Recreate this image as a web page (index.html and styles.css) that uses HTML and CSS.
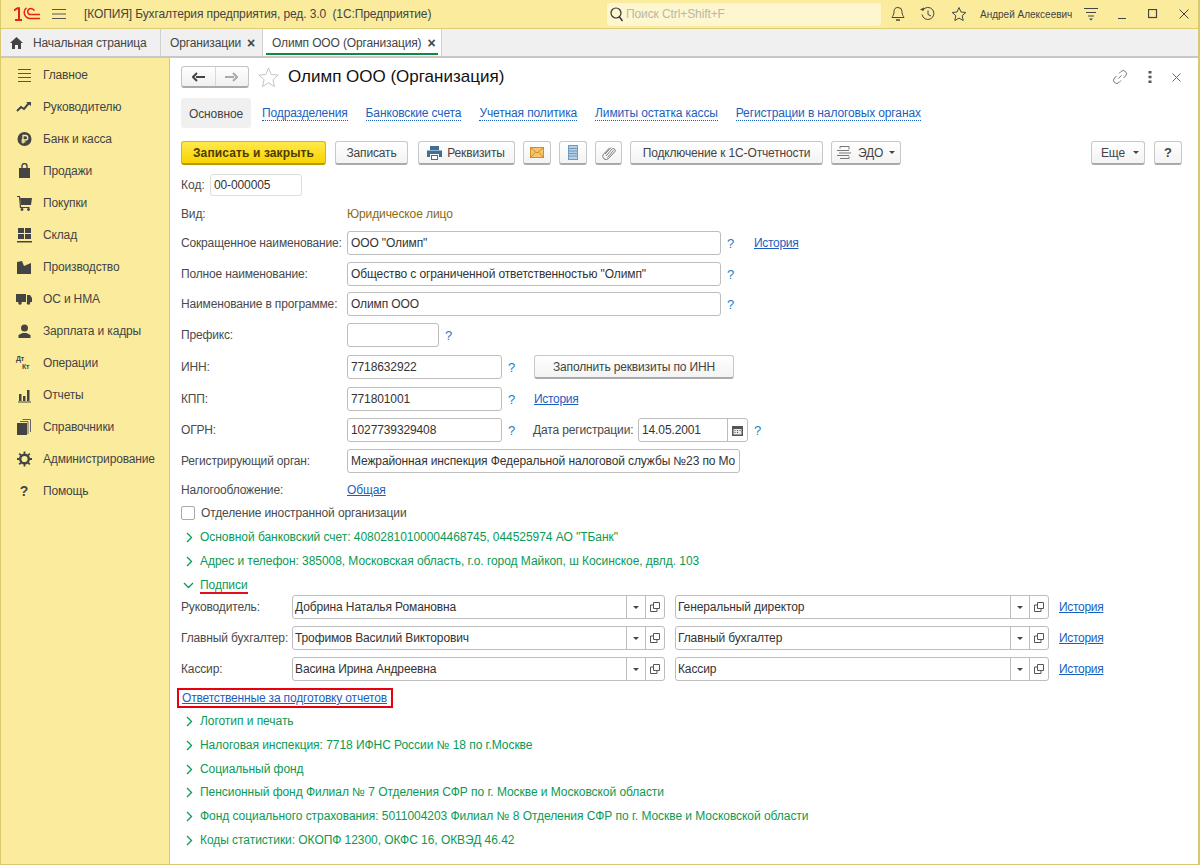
FILE: index.html
```html
<!DOCTYPE html>
<html lang="ru">
<head>
<meta charset="utf-8">
<title>Олимп ООО (Организация)</title>
<link rel="stylesheet" href="styles.css">
</head>
<body>
<div class="app">
  <header class="titlebar">
    <svg class="logo" width="26" height="14" viewBox="0 0 26 14"><path d="M0 3.500L3.500 1.200H5V13M1 13h7" fill="none" stroke="#e2231a" stroke-width="2"/><path d="M26 7.500H15.500a3.200 3.200 0 0 1 0-5.800c2.500-.8 4 .5 5 2" fill="none" stroke="#e2231a" stroke-width="1.500"/><path d="M26 11.500H15.500a6.500 6.500 0 0 1-5.300-6.500c0-2 1-3.300 2.300-4.200" fill="none" stroke="#e2231a" stroke-width="1.500"/></svg>
    <svg class="burger" width="14" height="12" viewBox="0 0 14 12"><path d="M0 1.500h14M0 6h14M0 10.500h14" stroke="#555" stroke-width="1"/></svg>
    <div class="app-title">[КОПИЯ] Бухгалтерия предприятия, ред. 3.0  (1С:Предприятие)</div>
    <div class="search">
      <svg width="14" height="15" viewBox="0 0 14 15"><circle cx="6" cy="6" r="5" fill="none" stroke="#333" stroke-width="1.2"/><path d="M9.500 10l3 4" stroke="#333" stroke-width="1.4"/></svg>
      <span>Поиск Ctrl+Shift+F</span>
    </div>
    <div class="tb-icons">
      <svg width="14" height="16" viewBox="0 0 14 16"><path d="M7 1.500a4 4 0 0 0-4 4c0 4-2 5-2 6h12c0-1-2-2-2-6a4 4 0 0 0-4-4z" fill="none" stroke="#444"/><path d="M5 14h4" stroke="#444" stroke-width="1.500"/></svg>
      <svg width="16" height="16" viewBox="0 0 16 16"><path d="M3 4a6 6 0 1 1-1 4.500" fill="none" stroke="#444"/><path d="M0 3.500l3.500 1.500 0.500-3.500z" fill="#444"/><path d="M8 4.500v4l3 1.500" fill="none" stroke="#444"/></svg>
      <svg width="16" height="16" viewBox="0 0 16 16"><path d="M8 1.500l2 4.500 4.800.5-3.600 3.200 1 4.800L8 12.100 3.800 14.500l1-4.800L1.200 6.500 6 6z" fill="none" stroke="#444"/></svg>
    </div>
    <div class="user">Андрей Алексеевич</div>
    <svg class="funnel" width="14" height="14" viewBox="0 0 14 14"><path d="M0 1.500h14M2 5.500h10M4 9h6" stroke="#444"/><path d="M5 11.500h4l-2 2z" fill="#444"/></svg>
    <div class="win-btns">
      <svg width="10" height="10" viewBox="0 0 10 10"><path d="M1 9.500h8" stroke="#444"/></svg>
      <svg width="10" height="10" viewBox="0 0 10 10"><rect x=".5" y=".5" width="8" height="8" fill="none" stroke="#444" stroke-width="1.200"/></svg>
      <svg width="10" height="10" viewBox="0 0 10 10"><path d="M.5.500l9 9M9.500.500l-9 9" stroke="#444"/></svg>
    </div>
  </header>

  <nav class="tabs">
    <div class="tab tab-home">
      <svg width="13" height="12" viewBox="0 0 13 12"><path d="M6.500 0L0 6h2v6h3V8h3v4h3V6h2z" fill="#444"/></svg>
      <span>Начальная страница</span>
    </div>
    <div class="tab tab-org"><span>Организации</span><b class="tab-x">×</b></div>
    <div class="tab tab-active"><span>Олимп ООО (Организация)</span><b class="tab-x">×</b></div>
  </nav>

  <div class="main">
    <aside class="sidebar">
      <div class="side-item"><svg class="si" viewBox="0 0 16 16"><path d="M2 2.500h13M2 6.500h13M2 10.500h13M2 14.500h13" stroke="#555"/></svg>Главное</div>
      <div class="side-item"><svg class="si" viewBox="0 0 16 16"><path d="M1 12l4-4 3 2 5-6" fill="none" stroke="#444" stroke-width="2"/><path d="M10 3h5v4z" fill="#444"/></svg>Руководителю</div>
      <div class="side-item"><svg class="si" viewBox="0 0 16 16"><circle cx="8.500" cy="8" r="7" fill="#444"/><path d="M7 12.500V4.500h2.500a2 2 0 0 1 0 4.500H5.500M5.500 10.800h4" fill="none" stroke="#fbeb9b" stroke-width="1.300"/></svg>Банк и касса</div>
      <div class="side-item"><svg class="si" viewBox="0 0 16 16"><path d="M3 5h11v10H3z" fill="#444"/><path d="M6 7V3a2.500 2.500 0 0 1 5 0v4" fill="none" stroke="#444" stroke-width="1.400"/></svg>Продажи</div>
      <div class="side-item"><svg class="si" viewBox="0 0 16 16"><path d="M1 1.500h2.500l1 11h9" fill="none" stroke="#444" stroke-width="1.200"/><path d="M4 3h12l-1 7H5z" fill="#444"/><circle cx="6" cy="14.500" r="1.400" fill="#444"/><circle cx="12.500" cy="14.500" r="1.400" fill="#444"/></svg>Покупки</div>
      <div class="side-item"><svg class="si" viewBox="0 0 16 16"><path d="M2 1h6v5H2zM9 1h6v5H9zM2 7h6v5H2zM9 7h6v5H9zM1 14h15v1.500H1z" fill="#444"/></svg>Склад</div>
      <div class="side-item"><svg class="si" viewBox="0 0 16 16"><path d="M1 15V3l5-1 2 5 7-3v11z" fill="#444"/></svg>Производство</div>
      <div class="side-item"><svg class="si" viewBox="0 0 16 16"><path d="M0 3h10v8H0zM11 4h3l2 3v4h-5z" fill="#444"/><circle cx="4" cy="12" r="1.800" fill="#444"/><circle cx="12.500" cy="12" r="1.800" fill="#444"/></svg>ОС и НМА</div>
      <div class="side-item"><svg class="si" viewBox="0 0 16 16"><circle cx="8.500" cy="5" r="3.500" fill="#444"/><path d="M2.500 15v-3l4-2h4l4 2v3z" fill="#444"/></svg>Зарплата и кадры</div>
      <div class="side-item"><span class="dtkt"><i>Дт</i><i class="kt">Кт</i></span>Операции</div>
      <div class="side-item"><svg class="si" viewBox="0 0 16 16"><path d="M3 7h2.500v7H3zM7 9h2.500v5H7zM11 3h2.500v11H11zM2 14.500h13V15.500H2z" fill="#444"/></svg>Отчеты</div>
      <div class="side-item"><svg class="si" viewBox="0 0 16 16"><path d="M1 4h10v12H1z" fill="#444"/><path d="M12 15V2.500H4M14.500 13V.500H6.500" fill="none" stroke="#666"/></svg>Справочники</div>
      <div class="side-item"><svg class="si" viewBox="0 0 16 16"><circle cx="8.500" cy="8" r="4.300" fill="none" stroke="#444" stroke-width="2.400"/><path d="M8.500 0.500v15M1 8h15M3.200 2.700l10.600 10.600M13.800 2.700L3.200 13.300" stroke="#444" stroke-width="1.800" stroke-dasharray="2.500 10"/></svg>Администрирование</div>
      <div class="side-item"><span class="side-q">?</span>Помощь</div>
    </aside>

    <section class="content">
      <div class="form-head">
        <div class="nav-btns">
          <span class="nav-b"><svg width="13" height="10" viewBox="0 0 13 10"><path d="M13 5H4M5 1L1 5l4 4" fill="none" stroke="#444" stroke-width="2"/></svg></span>
          <span class="nav-b"><svg width="13" height="10" viewBox="0 0 13 10"><path d="M0 5h9M8 1l4 4-4 4" fill="none" stroke="#aaa" stroke-width="2"/></svg></span>
        </div>
        <svg class="fav" width="21" height="20" viewBox="0 0 21 20"><path d="M10.500 1l2.700 6.500 7 .6-5.300 4.600 1.600 6.800-6-3.600-6 3.600 1.600-6.800L.8 8.100l7-.6z" fill="#fff" stroke="#c4c4c4"/></svg>
        <h1 class="form-title">Олимп ООО (Организация)</h1>
        <div class="head-tools">
          <svg width="16" height="16" viewBox="0 0 16 16"><path d="M6.500 9.500l3-3M7 4.500l2-2a3 3 0 0 1 4.500 4.500l-2 2M9 11.500l-2 2A3 3 0 0 1 2.500 9l2-2" fill="none" stroke="#777"/></svg>
          <svg width="4" height="12" viewBox="0 0 4 12"><path d="M.5 0h3v2.500h-3zM.5 4.700h3v2.500h-3zM.5 9.400h3v2.500h-3z" fill="#555"/></svg>
          <svg width="9" height="9" viewBox="0 0 9 9"><path d="M.5.500l8 8M8.500.500l-8 8" stroke="#666"/></svg>
        </div>
      </div>

      <div class="form-tabs">
        <span class="ft-current">Основное</span>
        <a class="ft-link ft1">Подразделения</a>
        <a class="ft-link">Банковские счета</a>
        <a class="ft-link">Учетная политика</a>
        <a class="ft-link">Лимиты остатка кассы</a>
        <a class="ft-link">Регистрации в налоговых органах</a>
      </div>

      <div class="cmd">
        <button class="btn btn-main">Записать и закрыть</button>
        <button class="btn b-save">Записать</button>
        <button class="btn b-req"><svg width="15" height="14" viewBox="0 0 15 14"><path d="M3 0h9v4H3zM0 4.500h15V11h-3V8H3v3H0z" fill="#3f6f96"/><path d="M4 9h7v5H4z" fill="#3f6f96"/><path d="M5 10h5v3H5z" fill="#fff"/></svg>Реквизиты</button>
        <button class="btn b-ico"><svg width="14" height="11" viewBox="0 0 14 11"><rect x=".5" y=".5" width="13" height="10" fill="#f5c670" stroke="#d98a20"/><path d="M1 1l6 5 6-5M1 10l4.500-5M13 10L8.500 5" fill="none" stroke="#d98a20"/></svg></button>
        <button class="btn b-ico"><svg width="10" height="15" viewBox="0 0 10 15"><rect x=".5" y=".5" width="9" height="14" fill="#b5cfe6" stroke="#6f9abb"/><path d="M.5 3.500h9M.5 6h9M.5 8.500h9M.5 11h9" stroke="#6f9abb"/></svg></button>
        <button class="btn b-clip"><svg width="14" height="14" viewBox="0 0 14 14"><path d="M4 10L10 3a2 2 0 0 1 3 2.500L6.500 12.500a3.300 3.300 0 0 1-5-4.300L7.500 2M5.500 11.500L11.500 4.500M3 8l6-6.500" fill="none" stroke="#777"/></svg></button>
        <button class="btn b-conn">Подключение к 1С-Отчетности</button>
        <button class="btn b-edo"><svg width="15" height="13" viewBox="0 0 15 13"><path d="M3 .500h9v3M3 .500v2M0 4.500h12M2 7h12M0 9.500h12M3 12.500h9v-2" fill="none" stroke="#777"/></svg>ЭДО<i class="caret"></i></button>
        <span class="cmd-gap"></span>
        <button class="btn b-more">Еще<i class="caret"></i></button>
        <button class="btn b-help">?</button>
      </div>

      <div class="row r-kod"><label class="lb-kod">Код:</label><div class="inp w-kod">00-000005</div></div>
      <div class="row m6"><label class="lb">Вид:</label><span class="brown">Юридическое лицо</span></div>
      <div class="row m5"><label class="lb">Сокращенное наименование:</label><div class="inp w-name">ООО "Олимп"</div><span class="q">?</span><a class="link hist hist1">История</a></div>
      <div class="row m7"><label class="lb">Полное наименование:</label><div class="inp w-name">Общество с ограниченной ответственностью "Олимп"</div><span class="q">?</span></div>
      <div class="row m6"><label class="lb">Наименование в программе:</label><div class="inp w-name">Олимп ООО</div><span class="q">?</span></div>
      <div class="row m7"><label class="lb">Префикс:</label><div class="inp w-kod"></div><span class="q">?</span></div>
      <div class="row m8"><label class="lb">ИНН:</label><div class="inp w-inn">7718632922</div><span class="q">?</span><button class="btn b-fill">Заполнить реквизиты по ИНН</button></div>
      <div class="row m8"><label class="lb">КПП:</label><div class="inp w-inn">771801001</div><span class="q">?</span><a class="link hist hist2">История</a></div>
      <div class="row m7"><label class="lb">ОГРН:</label><div class="inp w-inn">1027739329408</div><span class="q">?</span><label class="lb-date">Дата регистрации:</label>
        <div class="inp w-date"><span class="grow">14.05.2001</span><span class="seg seg-cal"><svg width="11" height="11" viewBox="0 0 11 11"><path d="M0 1h11v10H0z" fill="#555"/><path d="M1.500 4h8v5.500h-8z" fill="#e8e8e8"/><path d="M2.500 5h1v1h-1zM5 5h1v1H5zM7.500 5h1v1h-1zM2.500 7h1v1h-1zM5 7h1v1H5z" fill="#555"/></svg></span></div><span class="q">?</span></div>
      <div class="row m7"><label class="lb">Регистрирующий орган:</label><div class="inp w-org"><span class="clip">Межрайонная инспекция Федеральной налоговой службы №23 по Мо</span></div></div>
      <div class="row m5"><label class="lb">Налогообложение:</label><a class="link">Общая</a></div>
      <div class="row mn1 chk-row"><span class="chk"></span><span>Отделение иностранной организации</span></div>

      <div class="row grp"><svg class="chev" width="7" height="11" viewBox="0 0 7 11"><path d="M1 1l4.500 4.500L1 10" fill="none" stroke="#0a9a55" stroke-width="1.300"/></svg>Основной банковский счет: 40802810100004468745, 044525974 АО "ТБанк"</div>
      <div class="row grp"><svg class="chev" width="7" height="11" viewBox="0 0 7 11"><path d="M1 1l4.500 4.500L1 10" fill="none" stroke="#0a9a55" stroke-width="1.300"/></svg>Адрес и телефон: 385008, Московская область, г.о. город Майкоп, ш Косинское, двлд. 103</div>
      <div class="row grp"><svg class="chev-d" width="11" height="7" viewBox="0 0 11 7"><path d="M1 1l4.500 4.500L10 1" fill="none" stroke="#0a9a55" stroke-width="1.300"/></svg><span class="underlined">Подписи</span></div>

      <div class="row mn2"><label class="lb-sig">Руководитель:</label><div class="inp w-sig1"><span class="grow">Добрина Наталья Романовна</span><span class="seg"><i class="caret"></i></span><span class="seg"><svg width="10" height="10" viewBox="0 0 10 10"><path d="M3.500.500h6v6h-6zM3 3H.5v6.500H7V7" fill="none" stroke="#555"/></svg></span></div><div class="inp w-sig2"><span class="grow">Генеральный директор</span><span class="seg"><i class="caret"></i></span><span class="seg"><svg width="10" height="10" viewBox="0 0 10 10"><path d="M3.500.500h6v6h-6zM3 3H.5v6.500H7V7" fill="none" stroke="#555"/></svg></span></div><a class="link hist hist3">История</a></div>
      <div class="row m7"><label class="lb-sig">Главный бухгалтер:</label><div class="inp w-sig1"><span class="grow">Трофимов Василий Викторович</span><span class="seg"><i class="caret"></i></span><span class="seg"><svg width="10" height="10" viewBox="0 0 10 10"><path d="M3.500.500h6v6h-6zM3 3H.5v6.500H7V7" fill="none" stroke="#555"/></svg></span></div><div class="inp w-sig2"><span class="grow">Главный бухгалтер</span><span class="seg"><i class="caret"></i></span><span class="seg"><svg width="10" height="10" viewBox="0 0 10 10"><path d="M3.500.500h6v6h-6zM3 3H.5v6.500H7V7" fill="none" stroke="#555"/></svg></span></div><a class="link hist hist3">История</a></div>
      <div class="row m7"><label class="lb-sig">Кассир:</label><div class="inp w-sig1"><span class="grow">Васина Ирина Андреевна</span><span class="seg"><i class="caret"></i></span><span class="seg"><svg width="10" height="10" viewBox="0 0 10 10"><path d="M3.500.500h6v6h-6zM3 3H.5v6.500H7V7" fill="none" stroke="#555"/></svg></span></div><div class="inp w-sig2"><span class="grow">Кассир</span><span class="seg"><i class="caret"></i></span><span class="seg"><svg width="10" height="10" viewBox="0 0 10 10"><path d="M3.500.500h6v6h-6zM3 3H.5v6.500H7V7" fill="none" stroke="#555"/></svg></span></div><a class="link hist hist3">История</a></div>

      <div class="row m5"><a class="link resp">Ответственные за подготовку отчетов</a></div>

      <div class="row mn1 grp"><svg class="chev" width="7" height="11" viewBox="0 0 7 11"><path d="M1 1l4.500 4.500L1 10" fill="none" stroke="#0a9a55" stroke-width="1.300"/></svg>Логотип и печать</div>
      <div class="row grp"><svg class="chev" width="7" height="11" viewBox="0 0 7 11"><path d="M1 1l4.500 4.500L1 10" fill="none" stroke="#0a9a55" stroke-width="1.300"/></svg>Налоговая инспекция: 7718 ИФНС России № 18 по г.Москве</div>
      <div class="row grp"><svg class="chev" width="7" height="11" viewBox="0 0 7 11"><path d="M1 1l4.500 4.500L1 10" fill="none" stroke="#0a9a55" stroke-width="1.300"/></svg>Социальный фонд</div>
      <div class="row mn1 grp"><svg class="chev" width="7" height="11" viewBox="0 0 7 11"><path d="M1 1l4.500 4.500L1 10" fill="none" stroke="#0a9a55" stroke-width="1.300"/></svg>Пенсионный фонд Филиал № 7 Отделения СФР по г. Москве и Московской области</div>
      <div class="row grp"><svg class="chev" width="7" height="11" viewBox="0 0 7 11"><path d="M1 1l4.500 4.500L1 10" fill="none" stroke="#0a9a55" stroke-width="1.300"/></svg>Фонд социального страхования: 5011004203 Филиал № 8 Отделения СФР по г. Москве и Московской области</div>
      <div class="row grp"><svg class="chev" width="7" height="11" viewBox="0 0 7 11"><path d="M1 1l4.500 4.500L1 10" fill="none" stroke="#0a9a55" stroke-width="1.300"/></svg>Коды статистики: ОКОПФ 12300, ОКФС 16, ОКВЭД 46.42</div>
    </section>
  </div>
</div>
</body>
</html>
```
FILE: styles.css
```css
* { box-sizing: border-box; }
html, body { margin: 0; padding: 0; }
body {
  width: 1200px; height: 865px; overflow: hidden;
  font-family: "Liberation Sans", Arial, sans-serif;
  font-size: 12px; color: #4a4a4a; background: #fff;
}
i { font-style: normal; }
.app { display: flex; flex-direction: column; height: 865px; border-left: 1px solid #d8c96f; border-right: 2px solid #d8c96f; border-bottom: 1px solid #d8c96f; }

.titlebar { height: 29px; flex: none; display: flex; align-items: center; background: #fbec9d; border-bottom: 1px solid #dccd75; padding-left: 12px; }
.logo { flex: none; margin-left: 1px; }
.burger { margin-left: 12px; flex: none; }
.app-title { margin-left: 18px; width: 523px; color: #444; white-space: pre; letter-spacing: -.11px; }
.search { width: 274px; height: 23px; background: #fdf6cf; border-radius: 3px; display: flex; align-items: center; gap: 2px; padding-left: 3px; color: #b9b8a8; letter-spacing: -.1px; }
.tb-icons { display: flex; align-items: center; gap: 15px; margin-left: 10px; }
.user { margin-left: 13px; font-size: 10px; color: #444; width: 94px; white-space: nowrap; }
.funnel { margin-left: 10px; }
.win-btns { display: flex; align-items: center; gap: 21px; margin-left: 19px; }

.tabs { height: 29px; flex: none; display: flex; background: #f0f0f0; border-bottom: 2px solid #c8c8c8; }
.tab { height: 27px; display: flex; align-items: center; border-right: 1px solid #d0d0d0; color: #444; white-space: nowrap; letter-spacing: -.14px; }
.tab-home { width: 160px; padding-left: 9px; gap: 10px; }
.tab-org { width: 102px; padding-left: 9px; }
.tab-active { width: 179px; padding-left: 9px; background: #fff; position: relative; }
.tab-active::after { content: ""; position: absolute; left: 3px; right: 3px; bottom: 1px; height: 2px; background: #0d8a3f; }
.tab-x { margin-left: 6px; font-size: 14px; line-height: 1; color: #444; }

.main { flex: 1; display: flex; min-height: 0; }
.sidebar { width: 169px; flex: none; background: #fbec9d; border-right: 1px solid #d8c96f; padding-top: 1px; }
.side-item { height: 32px; display: flex; align-items: center; padding-left: 15px; color: #444; white-space: nowrap; letter-spacing: -.15px; }
.si { width: 16px; height: 16px; margin-right: 11px; flex: none; }
.dtkt { width: 16px; height: 16px; margin-right: 11px; flex: none; font-size: 7px; font-weight: bold; line-height: 8px; color: #444; display: flex; flex-direction: column; }
.kt { padding-left: 6px; }
.side-q { width: 16px; margin-right: 11px; text-align: center; font-size: 14px; font-weight: bold; color: #444; }

.content { flex: 1; background: #fff; padding: 7px 16px 0 11px; min-width: 0; }
.form-head { height: 24px; display: flex; align-items: center; }
.nav-btns { display: flex; width: 68px; height: 22px; border: 1px solid #c4c4c4; border-bottom: 2px solid #aaa; border-radius: 3px; background: linear-gradient(#fff, #f0f0f0); }
.nav-b { flex: 1; display: flex; align-items: center; justify-content: center; }
.nav-b + .nav-b { border-left: 1px solid #d8d8d8; }
.fav { margin-left: 9px; }
.form-title { margin: 0 0 0 9px; font-size: 17px; font-weight: normal; color: #111; white-space: nowrap; }
.head-tools { margin-left: auto; display: flex; align-items: center; gap: 20px; padding-right: 1px; }

.form-tabs { margin-top: 9px; height: 30px; display: flex; align-items: center; }
.ft-current { height: 30px; width: 70px; padding-top: 2px; background: #f0f0f0; border-radius: 3px; display: flex; align-items: center; justify-content: center; color: #444; letter-spacing: -.1px; }
.ft-link { color: #1a5fbf; border-bottom: 1px dotted #1a5fbf; line-height: 13px; margin-top: 2px; white-space: nowrap; margin-left: 18px; letter-spacing: -.13px; }
.ft1 { margin-left: 11px; }

.cmd { margin-top: 13px; height: 24px; display: flex; align-items: center; gap: 8px; }
.btn { font: inherit; height: 24px; padding: 0; color: #444; border: 1px solid #c8c8c8; border-bottom: 2px solid #aaa; border-radius: 3px; background: linear-gradient(#fff, #f3f3f3); display: inline-flex; align-items: center; justify-content: center; gap: 6px; white-space: nowrap; letter-spacing: -.15px; }
.btn-main { width: 145px; font-weight: bold; color: #4d3c00; background: linear-gradient(#ffe94d, #f8d400); border-color: #d8b800; border-bottom-color: #b89a00; letter-spacing: .12px; }
.b-save { width: 73px; margin-left: 1px; }
.b-req { width: 97px; margin-left: 2px; gap: 5px; padding-right: 1px; }
.b-ico { width: 28px; }
.b-clip { width: 27px; }
.b-conn { width: 193px; }
.b-edo { width: 70px; }
.cmd-gap { flex: 1; }
.b-more { width: 54px; margin-right: 1px; gap: 8px; padding-left: 4px; }
.b-help { width: 28px; font-weight: bold; font-size: 13px; }
.caret { display: inline-block; width: 0; height: 0; border: 3px solid transparent; border-top: 3px solid #444; border-bottom: 0; }

.row { display: flex; align-items: center; white-space: nowrap; height: 24px; }
.r-kod { height: 22px; margin-top: 9px; }
.mn2 { margin-top: -2px; }
.mn1 { margin-top: -1px; }
.m5 { margin-top: 5px; }
.m6 { margin-top: 6px; }
.m7 { margin-top: 7px; }
.m8 { margin-top: 8px; }
.lb { width: 166px; flex: none; letter-spacing: -.16px; }
.lb-kod { width: 29px; flex: none; }
.lb-sig { width: 111px; flex: none; letter-spacing: -.14px; }
.lb-date { margin-left: 19px; width: 105px; flex: none; letter-spacing: -.14px; }
.inp { height: 24px; display: flex; align-items: center; padding-left: 3px; background: #fff; border: 1px solid #bdbdbd; border-radius: 3px; color: #333; overflow: hidden; white-space: nowrap; flex: none; letter-spacing: -.12px; }
.w-kod { width: 92px; }
.r-kod .inp { height: 22px; border-color: #ddd; padding-left: 3px; }
.w-name { width: 374px; }
.w-inn { width: 155px; }
.w-date { width: 110px; }
.w-org { width: 393px; }
.w-sig1 { width: 373px; padding-left: 2px; }
.w-sig2 { width: 374px; margin-left: 10px; padding-left: 2px; }
.clip { overflow: hidden; display: block; }
.grow { flex: 1; min-width: 0; }
.seg { width: 19px; height: 22px; flex: none; border-left: 1px solid #bdbdbd; display: flex; align-items: center; justify-content: center; }
.seg-cal { width: 20px; }
.q { width: 7px; margin-left: 6px; color: #1b7fc4; flex: none; font-size: 13px; }
.link { color: #1a5fbf; text-decoration: underline; letter-spacing: -.1px; }
.hist { letter-spacing: -.3px; }
.brown { color: #8a6a10; letter-spacing: -.1px; }
.hist1 { margin-left: 20px; }
.hist2 { margin-left: 19px; }
.hist3 { margin-left: 10px; }
.b-fill { width: 200px; margin-left: 19px; }
.lb-date { margin-left: 18px; }

.chk-row { gap: 6px; letter-spacing: -.12px; }
.chk { width: 14px; height: 14px; border: 1px solid #aaa; border-radius: 2px; background: #fff; }
.grp { color: #0a9a55; padding-left: 5px; letter-spacing: -.05px; }
.chev { margin-right: 7px; flex: none; }
.chev-d { margin-right: 6px; margin-left: -3px; flex: none; }
.underlined { border-bottom: 2px solid #e01020; line-height: 14px; margin-top: 2px; }
.resp { display: block; line-height: 14px; outline: 2px solid #e8000f; padding: 1px 4px 1px 3px; margin-left: -2px; letter-spacing: -.17px; }
```
